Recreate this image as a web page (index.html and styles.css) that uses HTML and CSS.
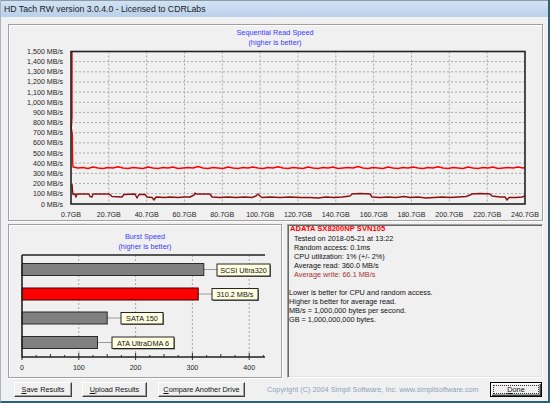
FILE: index.html
```html
<!DOCTYPE html>
<html>
<head>
<meta charset="utf-8">
<link rel="stylesheet" href="styles.css">
</head>
<body>
<div class="win">
  <div class="titlebar">HD Tach RW version 3.0.4.0 - Licensed to CDRLabs</div>
  <div class="client">
    <div class="panel top">
      <svg class="chart" width="533" height="195" viewBox="9 25 533 195">
        <text class="ttl" x="275" y="35" text-anchor="middle">Sequential Read Speed</text>
        <text class="ttl" x="275" y="45" text-anchor="middle">(higher is better)</text>
        <g class="grid">
          <line x1="71" x2="525" y1="61.65" y2="61.65"/>
          <line x1="71" x2="525" y1="71.8" y2="71.8"/>
          <line x1="71" x2="525" y1="81.95" y2="81.95"/>
          <line x1="71" x2="525" y1="92.1" y2="92.1"/>
          <line x1="71" x2="525" y1="102.25" y2="102.25"/>
          <line x1="71" x2="525" y1="112.4" y2="112.4"/>
          <line x1="71" x2="525" y1="122.55" y2="122.55"/>
          <line x1="71" x2="525" y1="132.7" y2="132.7"/>
          <line x1="71" x2="525" y1="142.85" y2="142.85"/>
          <line x1="71" x2="525" y1="153" y2="153"/>
          <line x1="71" x2="525" y1="163.15" y2="163.15"/>
          <line x1="71" x2="525" y1="173.3" y2="173.3"/>
          <line x1="71" x2="525" y1="183.45" y2="183.45"/>
          <line x1="71" x2="525" y1="193.6" y2="193.6"/>
          <line x1="108.8" x2="108.8" y1="51.5" y2="204"/>
          <line x1="146.7" x2="146.7" y1="51.5" y2="204"/>
          <line x1="184.5" x2="184.5" y1="51.5" y2="204"/>
          <line x1="222.3" x2="222.3" y1="51.5" y2="204"/>
          <line x1="260.2" x2="260.2" y1="51.5" y2="204"/>
          <line x1="298" x2="298" y1="51.5" y2="204"/>
          <line x1="335.8" x2="335.8" y1="51.5" y2="204"/>
          <line x1="373.7" x2="373.7" y1="51.5" y2="204"/>
          <line x1="411.5" x2="411.5" y1="51.5" y2="204"/>
          <line x1="449.3" x2="449.3" y1="51.5" y2="204"/>
          <line x1="487.2" x2="487.2" y1="51.5" y2="204"/>
        </g>
        <g class="ax" text-anchor="end">
          <text x="63" y="54">1,500 MB/s</text>
          <text x="63" y="64.15">1,400 MB/s</text>
          <text x="63" y="74.3">1,300 MB/s</text>
          <text x="63" y="84.45">1,200 MB/s</text>
          <text x="63" y="94.6">1,100 MB/s</text>
          <text x="63" y="104.75">1,000 MB/s</text>
          <text x="63" y="114.9">900 MB/s</text>
          <text x="63" y="125.05">800 MB/s</text>
          <text x="63" y="135.2">700 MB/s</text>
          <text x="63" y="145.35">600 MB/s</text>
          <text x="63" y="155.5">500 MB/s</text>
          <text x="63" y="165.65">400 MB/s</text>
          <text x="63" y="175.8">300 MB/s</text>
          <text x="63" y="185.95">200 MB/s</text>
          <text x="63" y="196.1">100 MB/s</text>
          <text x="63" y="206.5">0 MB/s</text>
        </g>
        <g class="ax" text-anchor="middle">
          <text x="71" y="216.5">0.7GB</text>
          <text x="108.8" y="216.5">20.7GB</text>
          <text x="146.7" y="216.5">40.7GB</text>
          <text x="184.5" y="216.5">60.7GB</text>
          <text x="222.3" y="216.5">80.7GB</text>
          <text x="260.2" y="216.5">100.7GB</text>
          <text x="298" y="216.5">120.7GB</text>
          <text x="335.8" y="216.5">140.7GB</text>
          <text x="373.7" y="216.5">160.7GB</text>
          <text x="411.5" y="216.5">180.7GB</text>
          <text x="449.3" y="216.5">200.7GB</text>
          <text x="487.2" y="216.5">220.7GB</text>
          <text x="525" y="216.5">240.7GB</text>
        </g>
        <polyline class="wline" points="72,184 72.5,190 73,194.5 75,194 76,197 77,194 89,194 90,196.5 92,197 93,194 108,194 110,194.5 112,196.5 122,197 124,194.5 135,194 137,198 139,194.5 145,194.5 147,197 152,197.5 154,200 156,197 165,197.5 170,197 178,197.5 184,197 190,197 194,195 195,193 196,194 210,194 212,197 220,197.5 228,197 236,197.5 245,197 252,197.5 256,196 258,194 260,196 262,197.5 270,197 280,197.5 290,197 300,197.5 310,197.5 318,198 326,197 334,197.5 342,197 350,196 352,194 360,193.5 370,194 372,197 380,197.5 388,197 396,197.5 404,196.5 410,197.5 418,197 426,198 434,197.5 442,197 450,197.5 458,197 466,196.5 470,195 472,194 480,193.5 490,194 492,196 500,197 505,197 507,200 509,197.5 516,197.5 522,197 525,196"/>
        <polyline class="rline" points="72,52 72,118 71.3,128 72.3,134 72.6,160 73,167 78,168 83,167.5 88,168.5 93,167 98,168 103,168.5 108,167.5 113,168 118,166.8 123,168 128,168.5 133,167.5 138,168 143,168.5 148,167 153,168 158,168.5 163,167.5 168,168 173,167 178,168.5 183,168 188,167.5 193,168 198,166.5 203,168 208,168.5 213,167.5 218,168 223,168.5 228,167 233,168 238,168.5 243,167.5 248,168 253,167 258,168 263,168.5 268,167.5 273,168 278,166.8 283,168 288,168.5 293,167.5 298,168 303,168.5 308,167 313,168 318,168.5 323,167.5 328,168 333,167 338,168.5 343,168 348,167.5 353,168 358,166.5 363,168 368,168.5 373,167.5 378,168 383,168.5 388,167 393,168 398,168.5 403,167.5 408,168 413,167 418,168 423,168.5 428,167.5 433,168 438,166.8 443,168 448,168.5 453,167.5 458,168 463,168.5 468,167 473,168 478,168.5 483,167.5 488,168 493,167 498,168.5 503,168 508,167.5 513,168 518,167 523,168 525,167.5"/>
        <rect class="frame" x="71" y="51.5" width="454" height="152.5"/>
      </svg>
    </div>
    <div class="row">
      <div class="panel burst">
        <svg class="chart" width="272" height="152" viewBox="9 225 272 152">
          <text class="ttl" x="145" y="239" text-anchor="middle">Burst Speed</text>
          <text class="ttl" x="145" y="249" text-anchor="middle">(higher is better)</text>
          <g class="grid">
            <line x1="78.8" x2="78.8" y1="255" y2="357"/>
            <line x1="135.6" x2="135.6" y1="255" y2="357"/>
            <line x1="192.4" x2="192.4" y1="255" y2="357"/>
            <line x1="249.2" x2="249.2" y1="255" y2="357"/>
          </g>
          <g class="ticks">
            <line x1="36.2" x2="36.2" y1="355" y2="357"/>
            <line x1="50.4" x2="50.4" y1="354" y2="357"/>
            <line x1="64.6" x2="64.6" y1="355" y2="357"/>
            <line x1="78.8" x2="78.8" y1="353" y2="360"/>
            <line x1="93" x2="93" y1="355" y2="357"/>
            <line x1="107.2" x2="107.2" y1="354" y2="357"/>
            <line x1="121.4" x2="121.4" y1="355" y2="357"/>
            <line x1="135.6" x2="135.6" y1="353" y2="360"/>
            <line x1="149.8" x2="149.8" y1="355" y2="357"/>
            <line x1="164" x2="164" y1="354" y2="357"/>
            <line x1="178.2" x2="178.2" y1="355" y2="357"/>
            <line x1="192.4" x2="192.4" y1="353" y2="360"/>
            <line x1="206.6" x2="206.6" y1="355" y2="357"/>
            <line x1="220.8" x2="220.8" y1="354" y2="357"/>
            <line x1="235" x2="235" y1="355" y2="357"/>
            <line x1="249.2" x2="249.2" y1="353" y2="360"/>
            <line x1="263.4" x2="263.4" y1="355" y2="357"/>
            <line x1="22" x2="22" y1="357" y2="360"/>
          </g>
          <g class="conn">
            <line x1="204" x2="217" y1="269.5" y2="269.5"/>
            <line x1="198" x2="212" y1="294" y2="294"/>
            <line x1="107" x2="121" y1="318" y2="318"/>
            <line x1="97.5" x2="112" y1="342.5" y2="342.5"/>
          </g>
          <rect class="bar" x="22" y="263.5" width="181.8" height="12"/>
          <rect class="bar red" x="22" y="288" width="176.2" height="12"/>
          <rect class="bar" x="22" y="312" width="85.2" height="12"/>
          <rect class="bar" x="22" y="336.5" width="75.5" height="12"/>
          <rect class="tipshadow" x="218" y="265" width="53" height="12"/>
          <rect class="tip" x="217" y="264" width="53" height="12"/>
          <text class="tiptext" x="243.5" y="272.6" text-anchor="middle">SCSI Ultra320</text>
          <rect class="tipshadow" x="213" y="289.5" width="46" height="11.5"/>
          <rect class="tip" x="212" y="288.5" width="46" height="11.5"/>
          <text class="tiptext" x="235" y="297" text-anchor="middle">310.2 MB/s</text>
          <rect class="tipshadow" x="122" y="313.5" width="42" height="11.5"/>
          <rect class="tip" x="121" y="312.5" width="42" height="11.5"/>
          <text class="tiptext" x="142" y="321" text-anchor="middle">SATA 150</text>
          <rect class="tipshadow" x="113" y="338" width="62" height="11.5"/>
          <rect class="tip" x="112" y="337" width="62" height="11.5"/>
          <text class="tiptext" x="143" y="345.5" text-anchor="middle">ATA UltraDMA 6</text>
          <path class="axis" d="M22 255 V357 H265 M22 255 H265"/>
          <g class="ax" text-anchor="middle">
            <text x="22" y="370">0</text>
            <text x="78.8" y="370">100</text>
            <text x="135.6" y="370">200</text>
            <text x="192.4" y="370">300</text>
            <text x="249.2" y="370">400</text>
          </g>
        </svg>
      </div>
      <div class="info">
        <div class="name">ADATA SX8200NP SVN105</div>
        <div class="ind">Tested on 2018-05-21 at 13:22</div>
        <div class="ind">Random access: 0.1ms</div>
        <div class="ind">CPU utilization: 1% (+/- 2%)</div>
        <div class="ind">Average read: 360.0 MB/s</div>
        <div class="ind warn">Average write: 66.1 MB/s</div>
        <div class="blank"></div>
        <div>Lower is better for CPU and random access.</div>
        <div>Higher is better for average read.</div>
        <div>MB/s = 1,000,000 bytes per second.</div>
        <div>GB = 1,000,000,000 bytes.</div>
      </div>
    </div>
    <div class="btnrow">
      <div class="btn save"><span><u>S</u>ave Results</span></div>
      <div class="btn upload"><span><u>U</u>pload Results</span></div>
      <div class="btn compare"><span><u>C</u>ompare Another Drive</span></div>
      <div class="copy">Copyright (C) 2004 Simpli Software, Inc. www.simplisoftware.com</div>
      <div class="btn done"><span class="focus"><u>D</u>one</span></div>
    </div>
  </div>
</div>
</body>
</html>
```

FILE: styles.css
```css
html, body {
  margin: 0;
  padding: 0;
  background: #f0f0f0;
}

.win {
  width: 550px;
  height: 403px;
  box-sizing: border-box;
  border-left: 1px solid #a7b6c6;
  border-right: 2px solid #2f6277;
  border-bottom: 2px solid #2f6277;
  background: #f0f0f0;
  display: flex;
  flex-direction: column;
  overflow: hidden;
  font-family: "Liberation Sans", Arial, sans-serif;
  color: #111;
}

.titlebar {
  flex: none;
  height: 17px;
  box-sizing: border-box;
  border-top: 1px solid #8d9aa8;
  background: linear-gradient(#d2e2f4, #b9d0ea);
  font-size: 8.7px;
  line-height: 16px;
  padding-left: 3px;
  color: #1a1a1a;
  white-space: nowrap;
}

.client {
  flex: 1;
  display: flex;
  flex-direction: column;
  padding: 7px 5px 0 7px;
  min-height: 0;
}

.panel {
  box-sizing: border-box;
  border: 1px solid #a0a0a0;
  box-shadow: 1px 1px 0 #fff, inset 1px 1px 0 #fff;
}

.top {
  flex: none;
  height: 197px;
}

.chart {
  display: block;
}

.ttl {
  font-family: "Liberation Sans", Arial, sans-serif;
  font-size: 7.3px;
  fill: #3a3aff;
}

.ax text, .ax {
  font-family: "Liberation Sans", Arial, sans-serif;
  font-size: 7.1px;
  fill: #262626;
}

.grid line {
  stroke: #a8a8a8;
  stroke-width: 1;
  stroke-dasharray: 2 2;
}

.frame {
  fill: none;
  stroke: #222;
  stroke-width: 1.6;
}

.rline {
  fill: none;
  stroke: #ff0000;
  stroke-width: 1.4;
  stroke-linejoin: round;
}

.wline {
  fill: none;
  stroke: #8b1010;
  stroke-width: 1.4;
  stroke-linejoin: round;
}

.row {
  flex: none;
  display: flex;
  gap: 5px;
  margin-top: 3px;
  height: 154px;
}

.burst {
  flex: none;
  width: 274px;
}

.axis {
  fill: none;
  stroke: #222;
  stroke-width: 1.6;
}

.ticks line {
  stroke: #333;
  stroke-width: 1;
}

.conn line {
  stroke: #9a9a9a;
  stroke-width: 1;
}

.bar {
  fill: #808080;
  stroke: #2a2a2a;
  stroke-width: 1;
}

.bar.red {
  fill: #ff0000;
  stroke: #3a0000;
}

.tip {
  fill: #ffffe1;
  stroke: #111;
  stroke-width: 0.9;
}

.tipshadow {
  fill: #707070;
}

.tiptext {
  font-family: "Liberation Sans", Arial, sans-serif;
  font-size: 7.3px;
  fill: #111;
}

.info {
  flex: 1;
  box-sizing: border-box;
  border: 1px solid;
  border-color: #a0a0a0 #fff #fff #a0a0a0;
  box-shadow: inset 1px 1px 0 #696969, inset -1px -1px 0 #e3e3e3;
  padding: 0 0 0 1px;
  font-size: 7.3px;
  line-height: 9.1px;
  color: #111;
  white-space: nowrap;
  overflow: hidden;
}

.info .name {
  margin-top: -1px;
  padding-left: 1px;
  color: #ff0000;
  font-weight: bold;
  font-size: 7.6px;
  line-height: 9.6px;
}

.info .ind {
  padding-left: 5px;
}

.info .warn {
  color: #a83232;
}

.info .blank {
  height: 9px;
}

.btnrow {
  flex: none;
  display: flex;
  align-items: center;
  margin-top: 4px;
  height: 15px;
  padding-left: 6px;
}

.btn {
  height: 15px;
  box-sizing: border-box;
  border: 1px solid;
  border-color: #fff #404040 #404040 #fff;
  box-shadow: inset -1px -1px 0 #a0a0a0;
  background: #f0f0f0;
  font-size: 7.3px;
  color: #111;
  display: flex;
  align-items: center;
  justify-content: center;
  white-space: nowrap;
}

.save { width: 58px; }
.upload { width: 65px; margin-left: 10px; }
.compare { width: 87px; margin-left: 11px; }

.copy {
  margin-left: 22px;
  font-size: 7.3px;
  color: #8ea2c0;
  white-space: nowrap;
}

.done {
  width: 52px;
  margin-left: auto;
  margin-right: 1px;
  border: 1px solid #000;
  box-shadow: inset 1px 1px 0 #fff, inset -1px -1px 0 #404040, inset -2px -2px 0 #a0a0a0;
  padding: 2px;
}

.done .focus {
  flex: 1;
  align-self: stretch;
  display: flex;
  align-items: center;
  justify-content: center;
  border: 1px dotted #333;
}
```
